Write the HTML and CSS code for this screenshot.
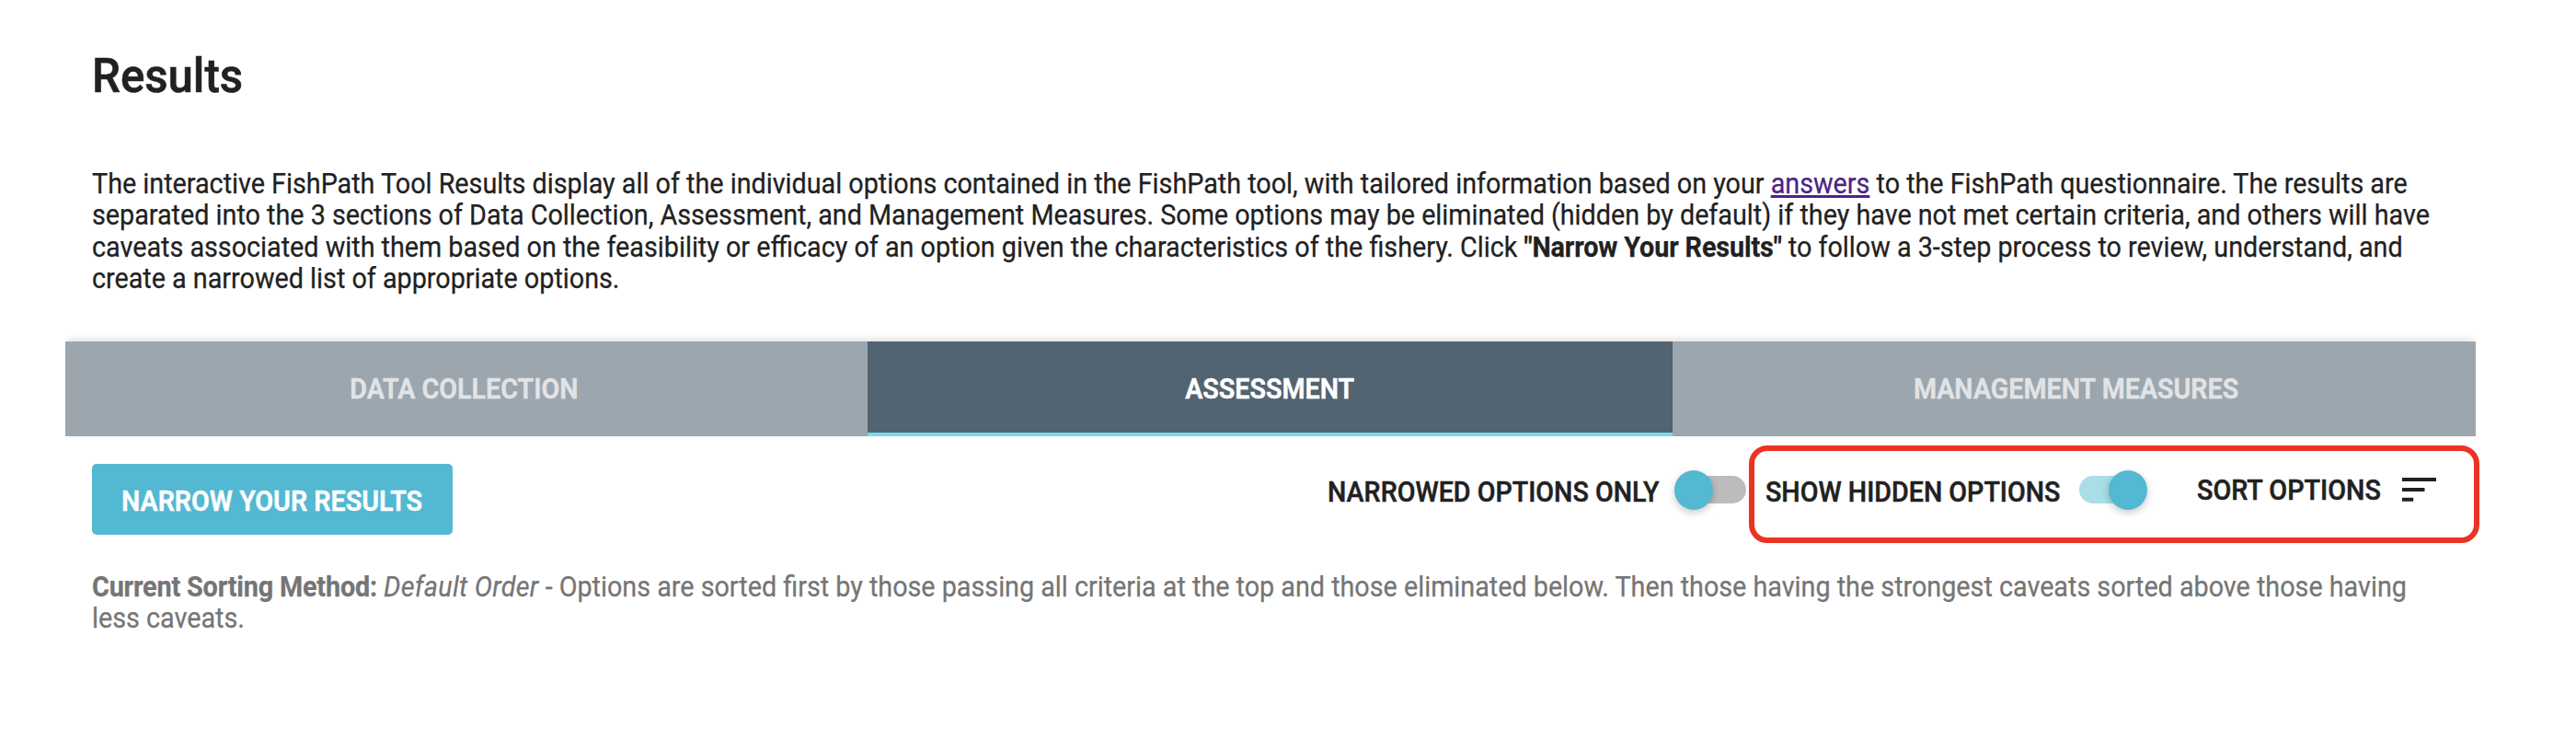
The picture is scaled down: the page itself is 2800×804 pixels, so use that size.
FILE: index.html
```html
<!DOCTYPE html>
<html lang="en">
<head>
<meta charset="utf-8">
<title>Results</title>
<link rel="stylesheet" href="styles.css">
</head>
<body>
<main class="page">
  <h1 class="title">Results</h1>
  <p class="intro">
    <span class="line">The interactive FishPath Tool Results display all of the individual options contained in the FishPath tool, with tailored information based on your <a class="link" href="#">answers</a> to the FishPath questionnaire. The results are</span>
    <span class="line">separated into the 3 sections of Data Collection, Assessment, and Management Measures. Some options may be eliminated (hidden by default) if they have not met certain criteria, and others will have</span>
    <span class="line">caveats associated with them based on the feasibility or efficacy of an option given the characteristics of the fishery. Click <b>"Narrow Your Results"</b> to follow a 3-step process to review, understand, and</span>
    <span class="line">create a narrowed list of appropriate options.</span>
  </p>
  <nav class="tabs">
    <div class="tab tab-first"><span class="caps">DATA COLLECTION</span></div>
    <div class="tab tab-active"><span class="caps">ASSESSMENT</span></div>
    <div class="tab tab-last"><span class="caps">MANAGEMENT MEASURES</span></div>
  </nav>
  <section class="toolbar">
    <button class="narrow"><span class="caps">NARROW YOUR RESULTS</span></button>
    <div class="option">
      <span class="label">NARROWED OPTIONS ONLY</span>
      <span class="switch"><i class="knob"></i></span>
    </div>
    <div class="highlight">
      <span class="label">SHOW HIDDEN OPTIONS</span>
      <span class="switch switch-on"><i class="knob"></i></span>
      <span class="label label-sort">SORT OPTIONS</span>
      <svg class="sort" width="37" height="26" viewBox="0 0 37 26"><path d="M0 0h37v4H0zM0 11h24.5v4H0zM0 21.8h12.2v4H0z"/></svg>
    </div>
  </section>
  <p class="sorting">
    <span class="line"><b>Current Sorting Method:</b> <em>Default Order</em> - Options are sorted first by those passing all criteria at the top and those eliminated below. Then those having the strongest caveats sorted above those having</span>
    <span class="line">less caveats.</span>
  </p>
</main>
</body>
</html>
```
FILE: styles.css
```css
* { box-sizing: border-box; }
body { margin: 0; background: #fff; color: #212121; font-family: Roboto, sans-serif; }
.page { width: 2800px; height: 804px; padding: 53px 105px 0 71px; overflow: hidden; }
.title { width: 300px; margin: 0 0 0 29px; font-size: 52px; line-height: 60px; font-weight: 500; -webkit-text-stroke: .6px; transform: scaleX(.945); transform-origin: 0 50%; }
.intro, .sorting { margin: 0 0 0 29px; font-size: 30.6px; line-height: 34.3px; -webkit-text-stroke: .25px; }
.intro { margin-top: 70px; height: 188px; }
.line { display: block; width: 2720px; white-space: nowrap; transform: scaleX(.939); transform-origin: 0 50%; }
b { font-weight: 700; letter-spacing: -.12px; }
.link { color: #4b2484; text-decoration: underline; }
.tabs { display: grid; grid-template-columns: 872px 875px 873px; width: 2620px; height: 103px; box-shadow: 0 -4px 8px -2px rgba(0,0,0,.14); clip-path: inset(-14px 0 0 0); }
.tab { display: flex; align-items: center; justify-content: center; background: #9ca6ae; color: #e1e4e6; font-size: 30.6px; font-weight: 600; }
.tab-first { padding-right: 5px; }
.tab-last { padding-left: 4px; }
.caps { display: inline-block; transform: scaleX(.937); -webkit-text-stroke: .5px; }
.tab-active { background: #526371; color: #fff; border-bottom: 4px solid #79d9e9; padding-top: 4px; }
.toolbar { display: flex; align-items: flex-start; width: 2624px; height: 147px; padding: 10px 0 0 29px; }
.narrow { display: flex; align-items: center; justify-content: center; width: 392px; height: 77px; margin-top: 20px; padding: 4px 0 0; border: 0; border-radius: 5px; background: #53b8d1; color: #fff; font: 600 30.6px Roboto, sans-serif; white-space: nowrap; }
.option { display: flex; align-items: center; height: 106px; margin-left: auto; padding-right: 3px; }
.label { width: 381px; font-size: 30.6px; line-height: 34px; font-weight: 500; white-space: nowrap; margin-top: -4px; -webkit-text-stroke: .5px; transform: scaleX(.937); transform-origin: 0 50%; }
.option .label { margin-left: -1px; margin-right: 1px; }
.switch { display: flex; align-items: center; width: 73px; height: 30px; margin-top: -10px; border-radius: 15px; background: #bcbcbc; }
.knob { display: block; flex: none; width: 42px; height: 43px; margin-left: -5px; border-radius: 50%; background: #53b8d1; box-shadow: 0 3px 8px rgba(0,0,0,.22); }
.switch-on { width: 73px; background: #a9dde8; }
.switch-on .knob { margin-left: 32px; }
.highlight { display: flex; align-items: center; width: 794px; height: 106px; padding-left: 12px; border: 6px solid #eb3223; border-radius: 20px; }
.highlight .label { width: 341px; }
.highlight .label-sort { width: 223px; margin-left: 55px; margin-top: -8px; transform: scaleX(.94); }
.sort { fill: #212121; margin-top: -10px; }
.sorting { color: #757575; }
.sorting b { letter-spacing: -.15px; }
.sorting em { letter-spacing: .32px; }
```
